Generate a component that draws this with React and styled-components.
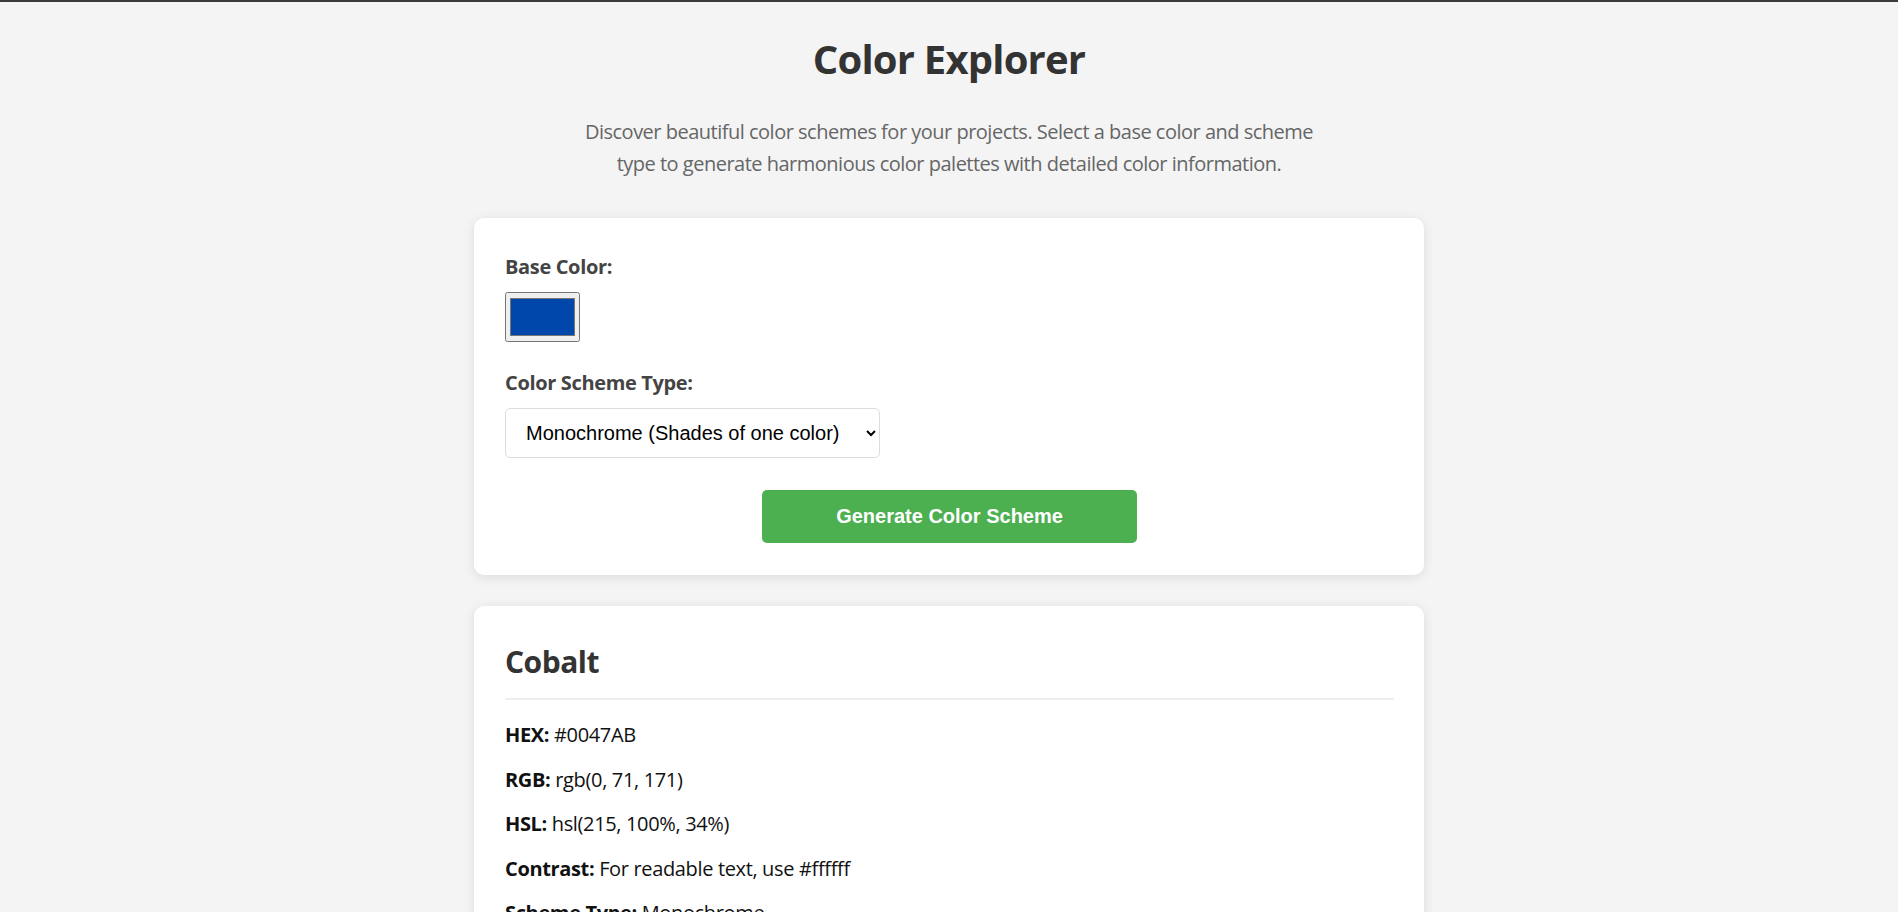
import React, { useState } from "react";
import styled, { createGlobalStyle } from "styled-components";

const GlobalStyle = createGlobalStyle`
  * {
    box-sizing: border-box;
  }

  body {
    margin: 0;
    padding: 25px;
    background: #f4f4f4;
    border-top: 2px solid #3c3c3c;
    font-family: "Segoe UI", "Open Sans", sans-serif;
    font-size: 20px;
    line-height: 1.6;
    letter-spacing: -0.35px;
    color: #333;
  }
`;

const Page = styled.div`
  max-width: 950px;
  margin: 0 auto;
`;

const Title = styled.h1`
  margin: 0 0 25px;
  font-size: 40px;
  font-weight: 700;
  letter-spacing: -0.8px;
  text-align: center;
  color: #333;
`;

const Intro = styled.p`
  max-width: 760px;
  margin: 0 auto 38px;
  text-align: center;
  letter-spacing: -0.5px;
  color: #666;
`;

const Panel = styled.section`
  background: #fff;
  border-radius: 10px;
  padding: ${(p) => p.$top}px 30px 32px 31px;
  margin-bottom: 31px;
  box-shadow: 0 2px 12px rgba(0, 0, 0, 0.1);
`;

const Field = styled.div`
  margin-bottom: 25px;
`;

const Label = styled.label`
  display: block;
  margin-bottom: 9px;
  font-weight: 700;
  color: #444;
`;

const ColorInput = styled.input`
  display: block;
  width: 75px;
  height: 50px;
  margin: 0;
  cursor: pointer;
`;

const Select = styled.select`
  display: block;
  width: 375px;
  padding: 12px 12px 12px 16px;
  border: 1px solid #ddd;
  border-radius: 5px;
  background: #fff;
  font-family: "Liberation Sans", Arial, sans-serif;
  font-size: 20px;
  letter-spacing: 0;
  color: #000;
`;

const GenerateButton = styled.button`
  display: block;
  width: 375px;
  margin: 32px auto 0;
  padding: 15px;
  border: none;
  border-radius: 5px;
  background: #4caf50;
  color: #fff;
  font-family: "Liberation Sans", Arial, sans-serif;
  font-size: 20px;
  font-weight: 700;
  letter-spacing: 0;
  cursor: pointer;

  &:hover {
    background: #45a049;
  }
`;

const ColorName = styled.h2`
  margin: 0 0 19px;
  padding-bottom: 12px;
  border-bottom: 2px solid #eee;
  font-size: 30px;
  font-weight: 700;
  letter-spacing: -0.5px;
  color: #333;
`;

const Info = styled.p`
  margin: 12.5px 0;
  color: #111;

  strong {
    font-weight: 700;
  }
`;

const Palette = styled.div`
  display: grid;
  grid-template-columns: repeat(5, 1fr);
  gap: 15px;
  margin-top: 25px;
`;

const Swatch = styled.div`
  height: 110px;
  border-radius: 6px;
  background: ${(p) => p.$color};
  color: ${(p) => (p.$light ? "#000" : "#fff")};
  display: flex;
  align-items: flex-end;
  justify-content: center;
  padding-bottom: 10px;
  font-size: 16px;
`;

const shades = [
  { hex: "#001F4D", light: false },
  { hex: "#00337C", light: false },
  { hex: "#0047AB", light: false },
  { hex: "#4D7EC4", light: false },
  { hex: "#99B5DD", light: true },
];

const schemes = [
  "Monochrome (Shades of one color)",
  "Complementary",
  "Analogous",
  "Triadic",
];

export default function App() {
  const [base, setBase] = useState("#0047ab");
  const [scheme, setScheme] = useState(schemes[0]);

  return (
    <Page>
      <GlobalStyle />
      <Title>Color Explorer</Title>
      <Intro>
        Discover beautiful color schemes for your projects. Select a base color and scheme
        type to generate harmonious color palettes with detailed color information.
      </Intro>

      <Panel $top={33}>
        <Field>
          <Label htmlFor="base">Base Color:</Label>
          <ColorInput
            id="base"
            type="color"
            value={base}
            onChange={(e) => setBase(e.target.value)}
          />
        </Field>
        <Field>
          <Label htmlFor="scheme">Color Scheme Type:</Label>
          <Select id="scheme" value={scheme} onChange={(e) => setScheme(e.target.value)}>
            {schemes.map((s) => (
              <option key={s}>{s}</option>
            ))}
          </Select>
        </Field>
        <GenerateButton>Generate Color Scheme</GenerateButton>
      </Panel>

      <Panel $top={32}>
        <ColorName>Cobalt</ColorName>
        <Info>
          <strong>HEX:</strong> #0047AB
        </Info>
        <Info>
          <strong>RGB:</strong> rgb(0, 71, 171)
        </Info>
        <Info>
          <strong>HSL:</strong> hsl(215, 100%, 34%)
        </Info>
        <Info>
          <strong>Contrast:</strong> For readable text, use #ffffff
        </Info>
        <Info>
          <strong>Scheme Type:</strong> Monochrome
        </Info>
        <Palette>
          {shades.map((s) => (
            <Swatch key={s.hex} $color={s.hex} $light={s.light}>
              {s.hex}
            </Swatch>
          ))}
        </Palette>
      </Panel>
    </Page>
  );
}
